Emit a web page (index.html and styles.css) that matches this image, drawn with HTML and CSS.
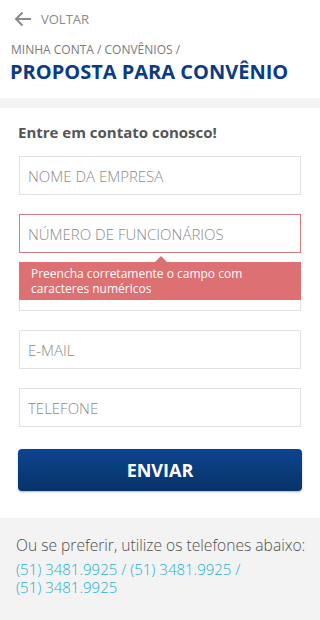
FILE: index.html
```html
<!DOCTYPE html>
<html lang="pt-BR">
<head>
<meta charset="utf-8">
<link rel="stylesheet" href="styles.css">
</head>
<body>
<header class="top">
  <a class="back" href="#">
    <svg class="back-icon" width="18" height="16" viewBox="0 0 18 16"><path d="M17 8H2M8.5 1.5L2 8l6.5 6.5" fill="none" stroke="#8a8a8a" stroke-width="2"/></svg>
    <span>VOLTAR</span>
  </a>
  <div class="crumbs">MINHA CONTA / CONVÊNIOS /</div>
  <h1 class="title">PROPOSTA PARA CONVÊNIO</h1>
</header>
<div class="band"></div>
<main class="card">
  <h2 class="lead">Entre em contato conosco!</h2>
  <form class="form">
    <div class="field"><input class="input" placeholder="NOME DA EMPRESA"></div>
    <div class="field field-error">
      <input class="input input-error" placeholder="NÚMERO DE FUNCIONÁRIOS">
      <div class="tip">Preencha corretamente o campo com caracteres numéricos</div>
    </div>
    <div class="field"><input class="input" placeholder=""></div>
    <div class="field"><input class="input" placeholder="E-MAIL"></div>
    <div class="field"><input class="input" placeholder="TELEFONE"></div>
    <button class="send" type="button">ENVIAR</button>
  </form>
</main>
<footer class="alt">
  <p class="alt-text">Ou se preferir, utilize os telefones abaixo:</p>
  <p class="phones">(51) 3481.9925 / (51) 3481.9925 / (51) 3481.9925</p>
</footer>
</body>
</html>
```
FILE: styles.css
```css
* { box-sizing: border-box; }
html, body { margin: 0; padding: 0; }
body {
  width: 320px;
  height: 620px;
  overflow: hidden;
  font-family: "Open Sans", "Liberation Sans", sans-serif;
  background: #fff;
}
.top { padding: 8px 10px 0 10px; height: 98px; }
.back {
  display: flex;
  align-items: center;
  gap: 9px;
  text-decoration: none;
  color: #8a8a8a;
  font-size: 13px;
  height: 22px;
  padding-left: 4px;
}
.back-icon { display: block; }
.crumbs {
  margin-top: 11.5px;
  font-size: 12px;
  color: #7a7a7a;
  line-height: 16px;
  padding-left: 1px;
}
.title {
  margin: 0;
  font-size: 20px;
  line-height: 28px;
  font-weight: 700;
  color: #0b3b85;
}
.band { height: 10px; background: #f4f4f4; }
.card { padding: 14px 18px 0 18px; height: 410px; }
.lead {
  margin: 0 0 14px 0;
  font-size: 15px;
  line-height: 20px;
  font-weight: 700;
  color: #555;
}
.form { display: flex; flex-direction: column; }
.field { position: relative; margin: 0 1px 19px 1px; }
.input {
  display: block;
  width: 100%;
  height: 39px;
  border: 1px solid #e2e2e2;
  padding: 0 8px;
  font-family: inherit;
  font-size: 15px;
  font-weight: 300;
  color: #555;
  background: #fff;
  outline: none;
}
.input::placeholder { color: #8a8a8a; font-weight: 300; }
.input-error { border-color: #d47a7d; }
.tip {
  position: absolute;
  left: 0;
  right: 0;
  top: 48px;
  background: #dd7072;
  color: #fff;
  font-size: 12px;
  line-height: 15px;
  padding: 4px 12px 4px 12px;
  height: 38px;
  z-index: 2;
}
.tip::before {
  content: "";
  position: absolute;
  top: -6px;
  left: 136px;
  border-left: 6px solid transparent;
  border-right: 6px solid transparent;
  border-bottom: 6px solid #dd7072;
}
.send {
  margin-top: 3px;
  height: 42px;
  border: 0;
  border-radius: 4px;
  background: linear-gradient(#0d4490, #073468);
  box-shadow: 0 1px 2px rgba(0,0,0,0.3);
  color: #fff;
  font-family: inherit;
  font-size: 18px;
  font-weight: 700;
}
.alt {
  background: #f3f3f3;
  padding: 16px 16px 0 16px;
  height: 102px;
}
.alt-text {
  margin: 0 0 4px 0;
  font-size: 15.6px;
  font-weight: 300;
  line-height: 22px;
  color: #4f4f4f;
  white-space: nowrap;
}
.phones {
  margin: 0;
  font-size: 15px;
  font-weight: 300;
  line-height: 18px;
  color: #1eb1d0;
  width: 250px;
}
```
